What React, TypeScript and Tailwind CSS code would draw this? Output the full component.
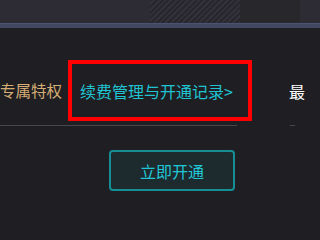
export default function App() {
  return (
    <div
      className="w-full h-screen overflow-hidden bg-[#1f1f23] relative"
      style={{ fontFamily: '"Noto Sans CJK SC", "Noto Sans", sans-serif' }}
    >
      {/* top banner */}
      <div className="h-[23px] bg-[#2d2b33] relative overflow-hidden">
        <div className="absolute left-[150px] top-0 w-[90px] h-[23px] bg-[repeating-linear-gradient(135deg,#26252b_0px,#26252b_2px,#34323a_2px,#34323a_4px)] opacity-80" />
        <div className="absolute left-[240px] top-0 w-[60px] h-[23px] bg-[#28272c]" />
      </div>
      <div className="h-[5px] bg-[#414862] border-t border-[#4b5370]" />

      {/* tabs row */}
      <div className="mt-[32px] flex items-center h-[61px]">
        <span className="shrink-0 w-[68px] text-[15.5px] leading-none text-[#d6ad74] whitespace-nowrap">专属特权</span>
        <div className="shrink-0 w-[184px] h-[61px] border-4 border-[#ff0000] flex items-center pl-[8px]">
          <span className="text-[16px] leading-none text-[#1fc3d2] whitespace-nowrap">续费管理与开通记录&gt;</span>
        </div>
        <span className="shrink-0 ml-[37px] text-[16px] leading-none text-white whitespace-nowrap">最</span>
      </div>

      {/* divider */}
      <div className="mt-[4px] flex">
        <div className="shrink-0 w-[237px] h-px bg-[#46464d]" />
        <div className="shrink-0 ml-[53px] w-[5px] h-px bg-[#46464d]" />
      </div>

      {/* button */}
      <div className="mt-[24px] pl-[109px]">
        <button className="w-[126px] h-[41px] rounded-[4px] border-2 border-[#168f94] bg-[#1d2a2e] text-[#22c7d6] text-[16px] leading-none">
          立即开通
        </button>
      </div>
    </div>
  );
}
